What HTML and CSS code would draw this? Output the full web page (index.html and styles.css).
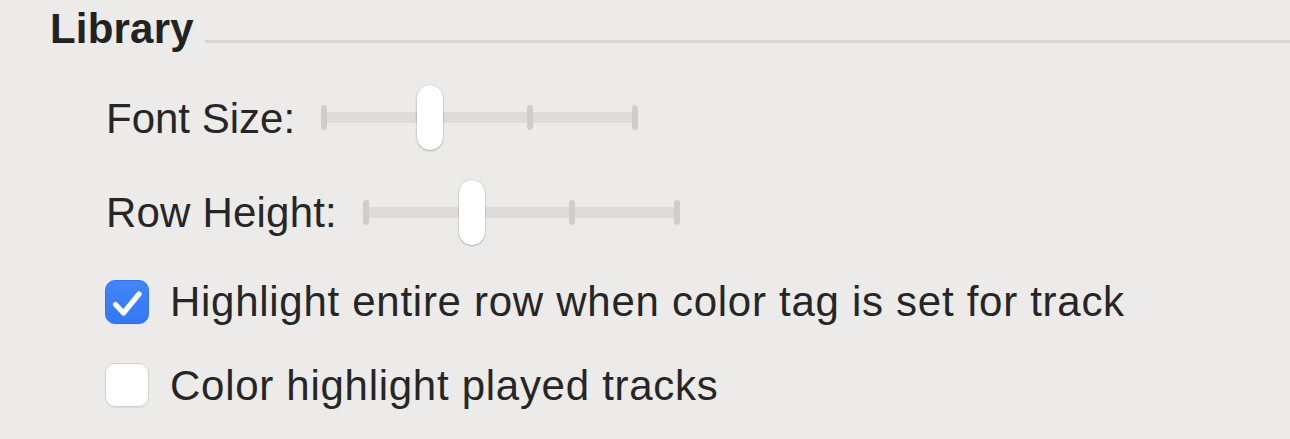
FILE: index.html
```html
<!DOCTYPE html>
<html lang="en">
<head>
<meta charset="utf-8">
<title>Library</title>
<link rel="stylesheet" href="styles.css">
</head>
<body>
<section class="panel">
  <header class="section-head">
    <h2 class="section-title">Library</h2>
    <div class="section-rule"></div>
  </header>

  <div class="row slider-row">
    <span class="label">Font Size:</span>
    <div class="slider">
      <div class="track"></div>
      <span class="tick tick-a"></span>
      <span class="tick tick-b"></span>
      <span class="tick tick-c"></span>
      <span class="thumb"></span>
    </div>
  </div>

  <div class="row slider-row slider-row-2">
    <span class="label">Row Height:</span>
    <div class="slider">
      <div class="track"></div>
      <span class="tick tick-a"></span>
      <span class="tick tick-b"></span>
      <span class="tick tick-c"></span>
      <span class="thumb"></span>
    </div>
  </div>

  <label class="row check-row check-row-1">
    <span class="box checked">
      <svg viewBox="0 0 44 44" width="44" height="44"><path d="M10.5 24.5 L18.5 33 L34 14" fill="none" stroke="#fff" stroke-width="5.2" stroke-linecap="round" stroke-linejoin="round"/></svg>
    </span>
    <span class="check-label">Highlight entire row when color tag is set for track</span>
  </label>

  <label class="row check-row check-row-2">
    <span class="box"></span>
    <span class="check-label">Color highlight played tracks</span>
  </label>
</section>
</body>
</html>
```

FILE: styles.css
```css
html, body {
  margin: 0;
  padding: 0;
}

body {
  background: #ecebe9;
  width: 1290px;
  height: 439px;
  overflow: hidden;
  font-family: "Liberation Sans", Arial, sans-serif;
  color: #262626;
}

.panel {
  display: flex;
  flex-direction: column;
}

.section-head {
  display: flex;
  align-items: flex-start;
  padding: 5px 0 0 50px;
  height: 48px;
}

.section-title {
  margin: 0;
  font-size: 42px;
  line-height: 48px;
  font-weight: 700;
  color: #222;
  letter-spacing: 0.2px;
}

.section-rule {
  flex: 1;
  height: 3px;
  margin: 35px 0 0 11px;
  background: #d7d6d4;
}

.row {
  display: flex;
  align-items: flex-start;
  padding-left: 106px;
}

.label {
  font-size: 42px;
  line-height: 48px;
  margin-top: 10px;
}

.slider-row {
  height: 65px;
  margin-top: 32px;
}

.slider-row-2 {
  margin-top: 30px;
}

.slider-row-2 .label {
  margin-top: 9px;
  letter-spacing: 0.2px;
}

.slider {
  position: relative;
  width: 317px;
  height: 65px;
  margin-left: 26px;
}

.track {
  position: absolute;
  left: 3px;
  right: 3px;
  top: 27px;
  height: 11px;
  background: #dddcda;
}

.tick {
  position: absolute;
  top: 20px;
  width: 6px;
  height: 25px;
  border-radius: 3px;
  background: #cfcecc;
}

.tick-a { left: 0; }
.tick-b { left: 206px; }
.tick-c { left: 311px; }

.thumb {
  position: absolute;
  left: 96px;
  top: 0;
  width: 26px;
  height: 65px;
  border-radius: 13px;
  background: #fff;
  box-shadow: 0 0 0 0.5px rgba(0, 0, 0, 0.12), 0 1px 2px rgba(0, 0, 0, 0.22);
}

.check-row {
  margin-top: 33px;
  height: 48px;
}

.check-row-2 {
  margin-top: 36px;
}

.box {
  box-sizing: border-box;
  width: 44px;
  height: 44px;
  margin-top: 2px;
  margin-left: -1px;
  border-radius: 10px;
  background: #fff;
  border: 1px solid #d2d1cf;
  box-shadow: 0 1px 1px rgba(0, 0, 0, 0.06);
  display: flex;
  align-items: center;
  justify-content: center;
  flex: none;
}

.check-row-2 .box {
  margin-top: 1px;
}

.box.checked {
  background: linear-gradient(#4187f7, #3377f3);
  border-color: #3273e8;
}

.box svg {
  display: block;
  flex: none;
}

.check-label {
  font-size: 42px;
  line-height: 48px;
  margin-left: 21px;
  letter-spacing: 0.72px;
}
```
